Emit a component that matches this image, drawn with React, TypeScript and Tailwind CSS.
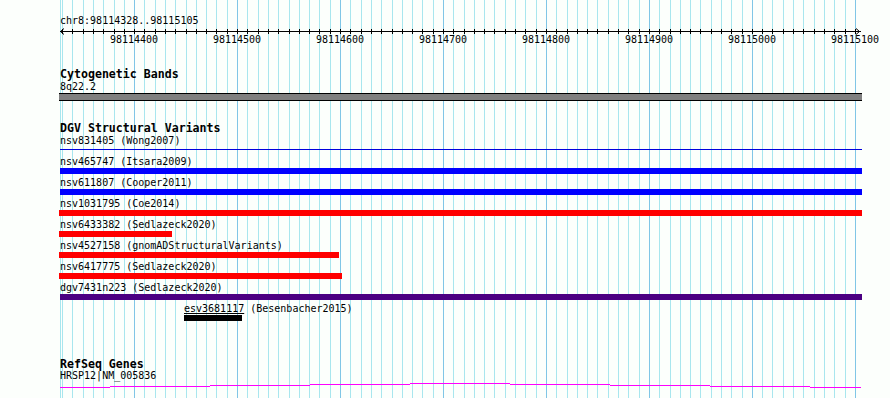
import React from 'react'

const START = 98114328
const END = 98115105
const X0 = 60
const PX = 800 / (END - START)

const toX = (p: number) => Math.round(X0 + (p - START) * PX)

const ticks: number[] = []
for (let p = 98114330; p <= END; p += 10) ticks.push(p)

const mono = { fontFamily: '"DejaVu Sans Mono", "Liberation Mono", monospace' }

function Grid() {
  return (
    <svg className="absolute inset-0 pointer-events-none" width={890} height={398} shapeRendering="crispEdges">
      <line x1={60.5} y1={0} x2={60.5} y2={398} stroke="#a8e6ee" />
      {ticks.map((p) => {
        const x = toX(p) + 0.5
        const major = p % 100 === 0
        return <line key={p} x1={x} y1={0} x2={x} y2={398} stroke={major ? '#80c6e6' : '#a8e6ee'} />
      })}
    </svg>
  )
}

function Ruler() {
  return (
    <svg width={890} height={24} className="block" shapeRendering="crispEdges">
      <line x1={60} y1={5.5} x2={861} y2={5.5} stroke="#000" />
      <path d="M64 2.5 L60.5 5.5 L64 8.5" fill="none" stroke="#000" shapeRendering="auto" />
      <path d="M856 2.5 L859.5 5.5 L856 8.5" fill="none" stroke="#000" shapeRendering="auto" />
      {ticks.map((p) => {
        const x = toX(p) + 0.5
        return <line key={p} x1={x} y1={3} x2={x} y2={8} stroke="#000" />
      })}
      {ticks
        .filter((p) => p % 100 === 0)
        .map((p) => (
          <text key={p} x={toX(p)} y={17} textAnchor="middle" fontSize={10} fill="#000" style={mono}>
            {p}
          </text>
        ))}
    </svg>
  )
}

function Label({ children, mt, x = 60 }: { children: React.ReactNode; mt: string; x?: number }) {
  return (
    <div className={`text-[10px] leading-[10px] text-black whitespace-pre ${mt}`} style={{ ...mono, paddingLeft: x }}>
      {children}
    </div>
  )
}

function Title({ children, mt }: { children: React.ReactNode; mt: string }) {
  return (
    <div className={`pl-[60px] text-[11.6px] leading-[12px] font-bold text-black ${mt}`} style={mono}>
      {children}
    </div>
  )
}

const variants = [
  { name: 'nsv465747 (Itsara2009)', bar: 'ml-[60px] w-[802px] bg-[#0000ff]' },
  { name: 'nsv611807 (Cooper2011)', bar: 'ml-[60px] w-[802px] bg-[#0000ff]' },
  { name: 'nsv1031795 (Coe2014)', bar: 'ml-[59px] w-[803px] bg-[#ff0000]' },
  { name: 'nsv6433382 (Sedlazeck2020)', bar: 'ml-[59px] w-[113px] bg-[#ff0000]' },
  { name: 'nsv4527158 (gnomADStructuralVariants)', bar: 'ml-[59px] w-[280px] bg-[#ff0000]' },
  { name: 'nsv6417775 (Sedlazeck2020)', bar: 'ml-[59px] w-[283px] bg-[#ff0000]' },
  { name: 'dgv7431n223 (Sedlazeck2020)', bar: 'ml-[60px] w-[802px] bg-[#4b0082]' },
]

function Gene() {
  const segs = [
    [60, 110, 387],
    [110, 210, 386],
    [210, 310, 385],
    [310, 410, 384],
    [410, 510, 383],
    [510, 610, 384],
    [610, 710, 385],
    [710, 810, 386],
    [810, 861, 387],
  ]
  return (
    <svg width={890} height={10} className="block" shapeRendering="crispEdges">
      {segs.map(([a, b, y]) => (
        <line key={a} x1={a} y1={y - 381 + 0.5} x2={b} y2={y - 381 + 0.5} stroke="#ff00ff" />
      ))}
    </svg>
  )
}

export default function App() {
  return (
    <div className="relative w-[890px] h-[398px] overflow-hidden bg-[#fcfffc]">
      <Grid />
      <div className="relative flex flex-col">
        <Label mt="mt-[16px]">chr8:98114328..98115105</Label>
        <Ruler />

        <Title mt="mt-[18px]">Cytogenetic Bands</Title>
        <Label mt="mt-[2px]">8q22.2</Label>
        <div className="mt-[1px] ml-[59px] w-[803px] h-[8px] bg-[#808080] border-y border-black" />

        <Title mt="mt-[21px]">DGV Structural Variants</Title>
        <Label mt="mt-[2px]">nsv831405 (Wong2007)</Label>
        <div className="mt-[3px] ml-[60px] w-[802px] h-[1px] bg-[#0000dd]" />

        {variants.map((v, i) => (
          <React.Fragment key={v.name}>
            <Label mt={i === 0 ? 'mt-[7px]' : 'mt-[4px]'}>{v.name}</Label>
            <div className={`mt-[1px] h-[6px] ${v.bar}`} />
          </React.Fragment>
        ))}

        <Label mt="mt-[4px]" x={184}>
          <span className="underline">esv3681117</span> (Besenbacher2015)
        </Label>
        <div className="mt-[1px] ml-[184px] w-[58px] h-[6px] bg-black" />

        <Title mt="mt-[37px]">RefSeq Genes</Title>
        <Label mt="mt-[1px]">HRSP12|NM_005836</Label>
        <Gene />
      </div>
    </div>
  )
}
